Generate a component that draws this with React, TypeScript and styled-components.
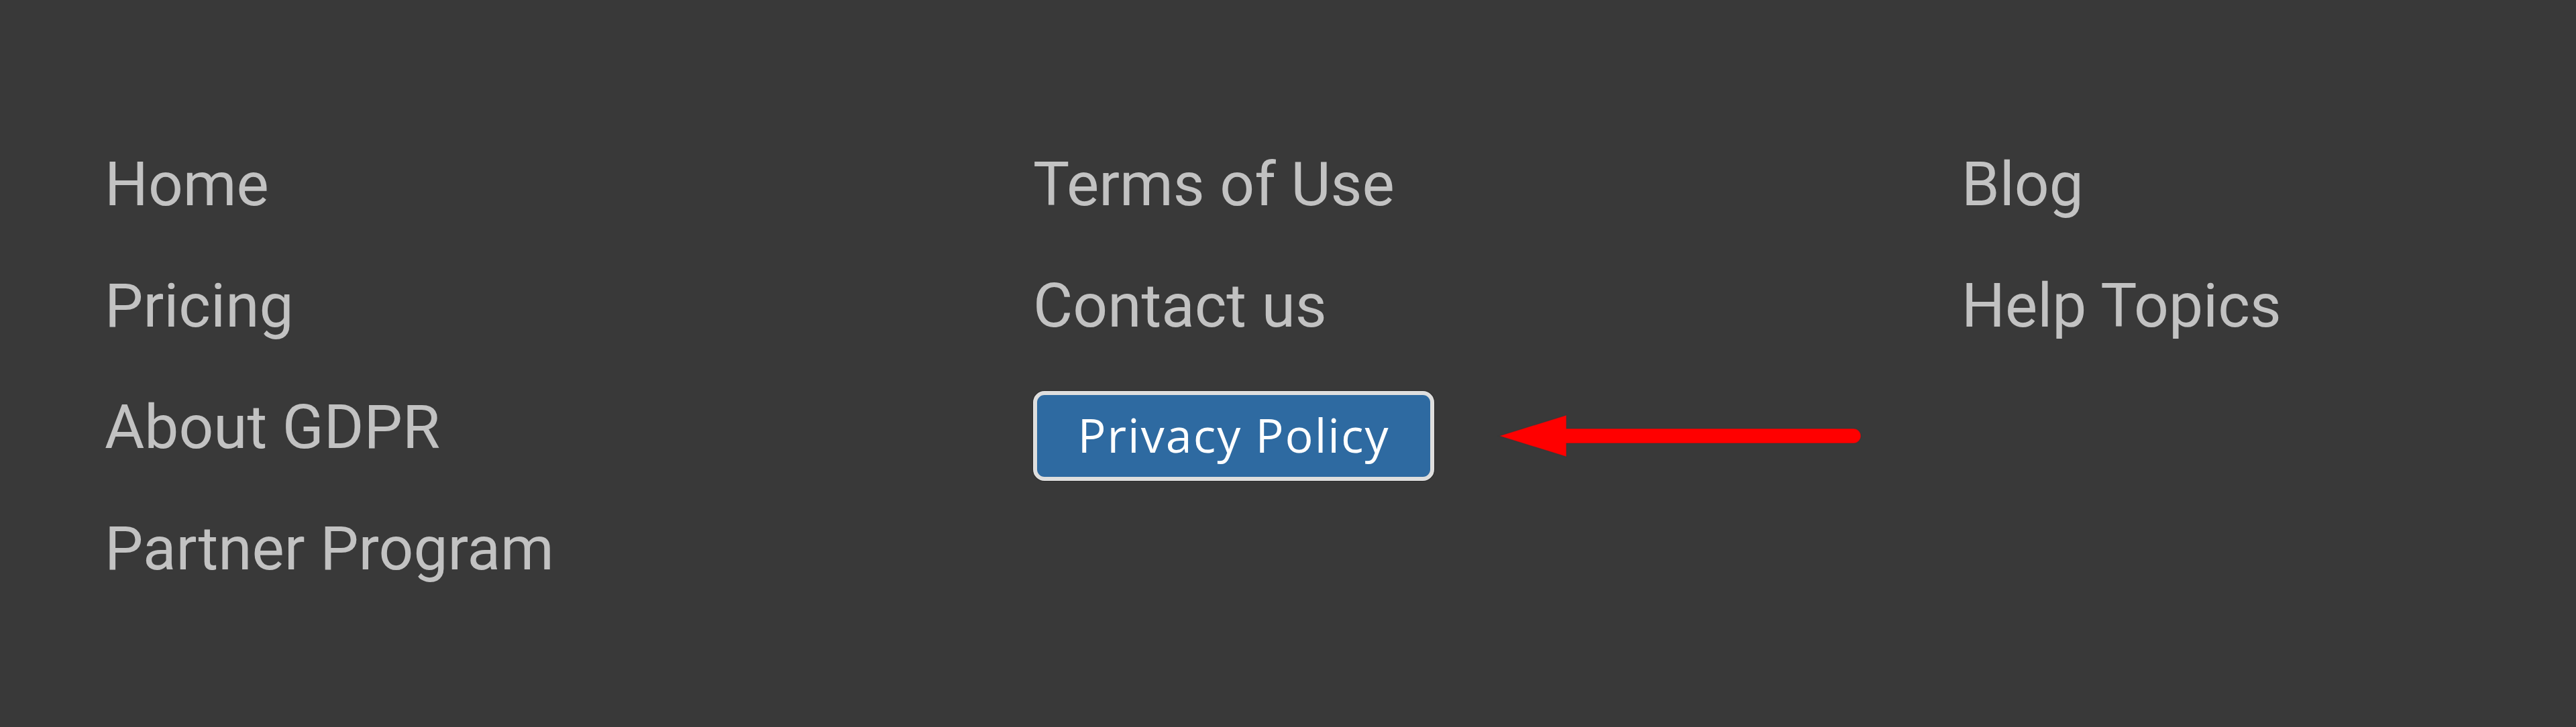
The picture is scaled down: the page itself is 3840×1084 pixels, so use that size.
import React from "react";
import styled, { createGlobalStyle } from "styled-components";

const Global = createGlobalStyle`
  html, body {
    margin: 0;
    padding: 0;
    background: #393939;
  }
  body {
    font-family: Roboto, "Noto Sans", sans-serif;
  }
`;

const Footer = styled.footer`
  box-sizing: border-box;
  width: 3840px;
  height: 1084px;
  background: #393939;
  padding: 184px 0 0 156px;
  display: grid;
  grid-template-columns: 1384px 1384px 1fr;
  align-items: start;
`;

const Column = styled.ul`
  list-style: none;
  margin: 0;
  padding: 0;
  display: flex;
  flex-direction: column;
`;

const Item = styled.li`
  height: 181px;
  display: flex;
  align-items: center;
`;

const Link = styled.a`
  font-family: Roboto, "Noto Sans", sans-serif;
  font-size: 91px;
  line-height: normal;
  color: #c2c2c2;
  text-decoration: none;
  white-space: nowrap;
`;

const ButtonWrap = styled.div`
  position: relative;
  margin-top: 27px;
`;

const PolicyButton = styled.a`
  box-sizing: border-box;
  display: inline-flex;
  align-items: center;
  justify-content: center;
  width: 598px;
  height: 134px;
  padding: 0 0 4px 0;
  background: #2e6aa1;
  border: 6px solid #dedede;
  border-radius: 17px;
  box-shadow: 0 0 0 1px #2a2a2a;
  color: #ffffff;
  font-family: "Open Sans", Lato, sans-serif;
  font-size: 70px;
  letter-spacing: 2px;
  text-decoration: none;
  white-space: nowrap;
`;

const Arrow = styled.svg`
  position: absolute;
  left: calc(100% + 97px);
  top: 50%;
  transform: translateY(-50%);
  width: 540px;
  height: 62px;
  overflow: visible;
`;

const cols: string[][] = [
  ["Home", "Pricing", "About GDPR", "Partner Program"],
  ["Terms of Use", "Contact us"],
  ["Blog", "Help Topics"],
];

export default function App() {
  return (
    <>
      <Global />
      <Footer>
        {cols.map((c, i) => (
          <Column key={i}>
            {c.map((t) => (
              <Item key={t}>
                <Link href="#">{t}</Link>
              </Item>
            ))}
            {i === 1 && (
              <Item>
                <ButtonWrap>
                  <PolicyButton href="#">Privacy Policy</PolicyButton>
                  <Arrow viewBox="0 0 540 62">
                    <path
                      d="M0 31 L100 0 L100 20 L528 20 A11 11 0 0 1 528 42 L100 42 L100 62 Z"
                      fill="#ff0000"
                      stroke="#1f3b3b"
                      strokeOpacity="0.35"
                      strokeWidth="1.5"
                    />
                  </Arrow>
                </ButtonWrap>
              </Item>
            )}
          </Column>
        ))}
      </Footer>
    </>
  );
}
